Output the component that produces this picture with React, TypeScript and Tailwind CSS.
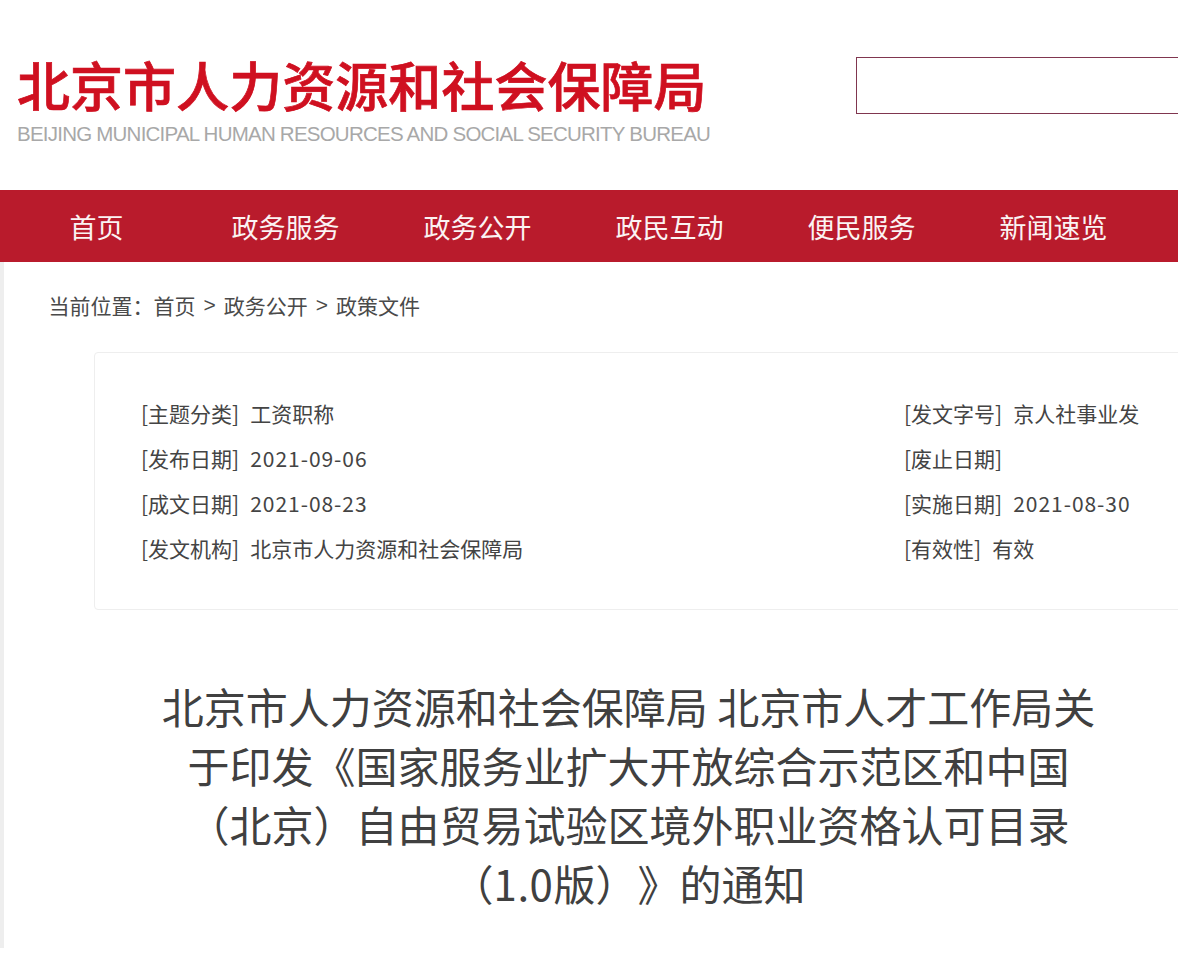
const cjk = { fontFamily: '"Noto Sans CJK SC", "Liberation Sans", sans-serif' };

const navItems = ['政务服务', '政务公开', '政民互动', '便民服务', '新闻速览'];

const metaRows = [
  [['主题分类', '工资职称'], ['发文字号', '京人社事业发']],
  [['发布日期', '2021-09-06'], ['废止日期', '']],
  [['成文日期', '2021-08-23'], ['实施日期', '2021-08-30']],
  [['发文机构', '北京市人力资源和社会保障局'], ['有效性', '有效']],
];

function MetaCell({ label, value }: { label: string; value: string }) {
  // 日期的数字比默认字体窄，加一点字距
  const isDate = /^\d/.test(value);
  return (
    <div className="flex whitespace-nowrap">
      <span>[{label}]</span>
      {value && <span className={isDate ? 'ml-[11px] tracking-[0.95px]' : 'ml-[11px]'}>{value}</span>}
    </div>
  );
}

export default function App() {
  return (
    <div className="h-[978px] w-[1178px] overflow-hidden bg-white" style={cjk}>
      {/* 顶部 logo 和搜索框 */}
      <header className="flex h-[190px] items-start">
        <div className="w-[856px] shrink-0 pl-[17px] pt-[50px]">
          <div className="text-[53px] font-medium leading-[68px] tracking-[0.05px] text-[#cf1020] whitespace-nowrap [-webkit-text-stroke:0.7px_#cf1020]">
            北京市人力资源和社会保障局
          </div>
          <div className="mt-[2px] text-[20.5px] leading-[28px] tracking-[-0.77px] text-[#a8a8a8] whitespace-nowrap" style={{ fontFamily: '"Liberation Sans", sans-serif' }}>
            BEIJING MUNICIPAL HUMAN RESOURCES AND SOCIAL SECURITY BUREAU
          </div>
        </div>
        <div className="mt-[57px] h-[57px] flex-1 border border-r-0 border-[#80364f]" />
      </header>

      {/* 导航 */}
      <nav className="flex h-[72px] items-center bg-[#b91b2c] pl-[69.5px] pt-[2px] text-[27px] text-[#fbf3f3] whitespace-nowrap">
        <span className="mr-[108px]">首页</span>
        {navItems.map((item) => (
          <span key={item} className="mr-[84px]">{item}</span>
        ))}
      </nav>

      <div className="ml-0 h-[686px] border-l-[4px] border-[#eeeeee]">
        {/* 面包屑 */}
        <div className="flex h-[90px] items-start pl-[44.5px] pt-[27px] text-[21px] leading-[32px] text-[#4a4a4a] whitespace-nowrap">
          当前位置：首页<span className="mx-[8px]" style={{ fontFamily: '"Liberation Sans", sans-serif' }}>&gt;</span>政务公开<span className="mx-[8px]" style={{ fontFamily: '"Liberation Sans", sans-serif' }}>&gt;</span>政策文件
        </div>

        {/* 信息卡片 */}
        <section className="ml-[90px] h-[258px] w-[1200px] rounded-sm border border-[#eeeeee] pl-[46px] pt-[38px] text-[21px] leading-[45px] text-[#444444]">
          {metaRows.map(([left, right]) => (
            <div key={left[0]} className="flex">
              <div className="w-[763px] shrink-0">
                <MetaCell label={left[0]} value={left[1]} />
              </div>
              <MetaCell label={right[0]} value={right[1]} />
            </div>
          ))}
        </section>

        {/* 标题 */}
        <h1 className="ml-[146.5px] mt-[66px] w-[956px] text-center text-[42px] font-normal leading-[59px] text-[#404040] whitespace-nowrap [text-spacing-trim:space-all]">
          北京市人力资源和社会保障局 北京市人才工作局关<br />
          于印发《国家服务业扩大开放综合示范区和中国<br />
          （北京）自由贸易试验区境外职业资格认可目录<br />
          （<span className="tracking-[0.5px]">1.0</span>版）》的通知
        </h1>
      </div>
    </div>
  );
}
